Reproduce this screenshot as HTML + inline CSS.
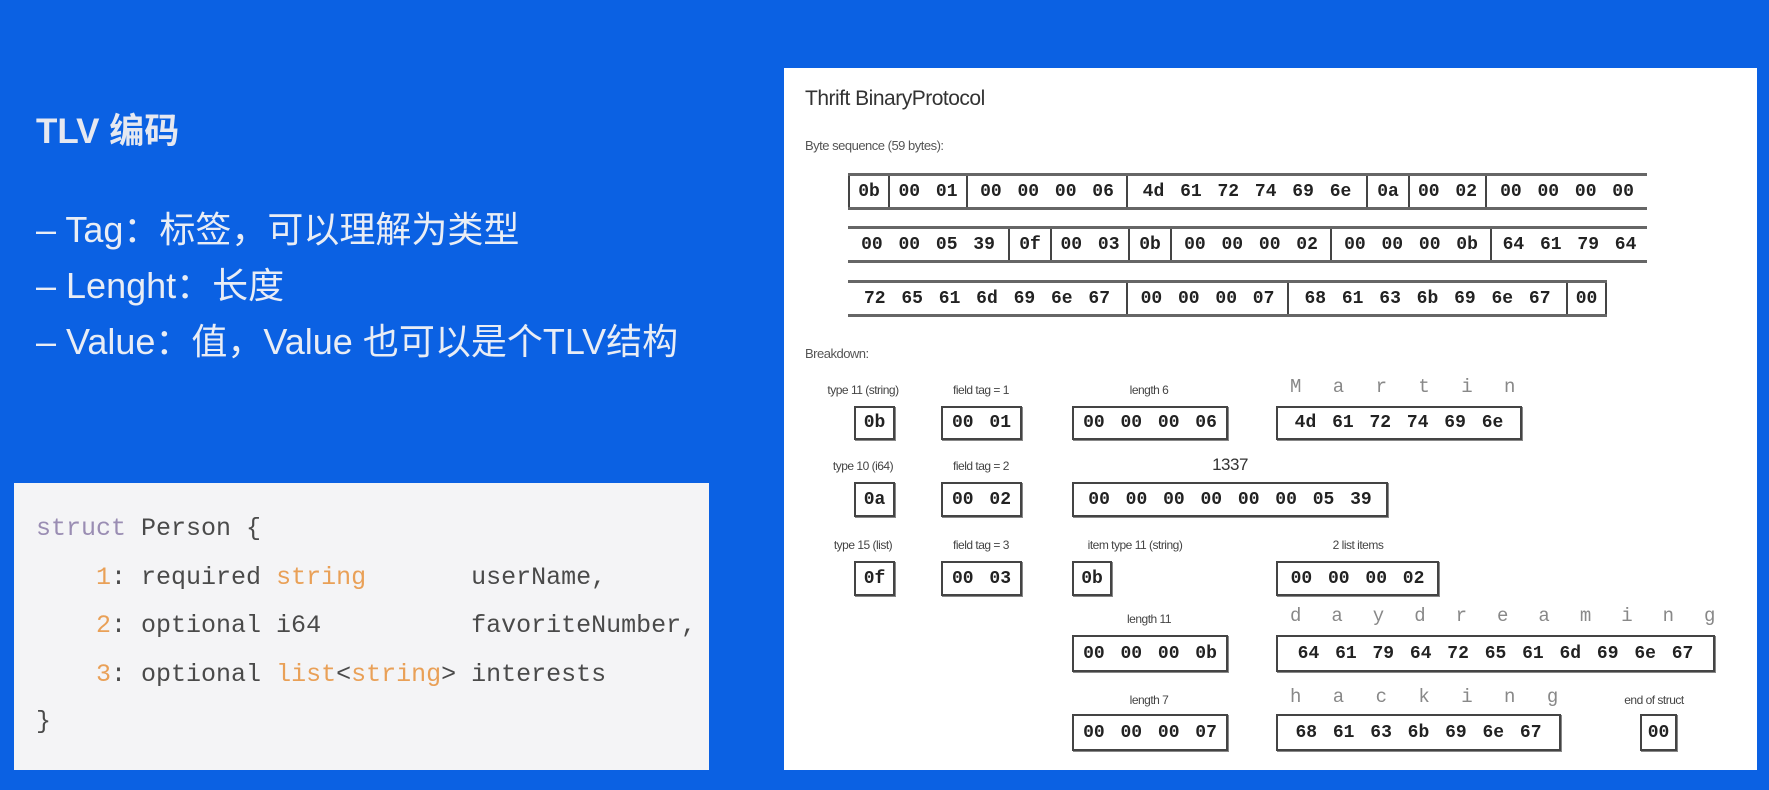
<!DOCTYPE html>
<html><head><meta charset="utf-8"><style>
*{margin:0;padding:0;box-sizing:border-box}
body{width:1769px;height:790px;background:#0b61e3;position:relative;overflow:hidden;font-family:"Liberation Sans","Noto Sans CJK SC",sans-serif}
.t{position:absolute;color:#e9edf5;white-space:nowrap}
.code{position:absolute;left:14px;top:483px;width:695px;height:287px;background:#f4f4f6}
.cl{position:absolute;left:22px;font-family:"Liberation Mono",monospace;font-size:25px;color:#4a4a4a;white-space:pre;line-height:30px}
.k{color:#9a8db3}.o{color:#e9a057}
.panel{position:absolute;left:784px;top:68px;width:973px;height:702px;background:#fff}
.a{position:absolute;white-space:nowrap}
.row{position:absolute;height:37px;border-top:3px solid #666;border-bottom:3px solid #666;display:flex}
.c{height:100%;border-right:2px solid #444;display:flex;align-items:center;justify-content:center;font-family:"Liberation Mono",monospace;font-weight:bold;font-size:18px;color:#222;word-spacing:5px}
.c.l{border-left:2px solid #444}
.c.n{border-right:none}
.b{position:absolute;border:2.5px solid #444;box-shadow:1px 1px 0 #888;display:flex;align-items:center;justify-content:center;font-family:"Liberation Mono",monospace;font-weight:bold;font-size:18px;color:#222;word-spacing:5px}
.lb{position:absolute;font-family:"Liberation Sans",sans-serif;font-size:12px;color:#444;transform:translateX(-50%);white-space:nowrap;letter-spacing:-0.5px}
.gl{position:absolute;font-family:"Liberation Mono",monospace;font-size:19px;color:#888;white-space:pre;letter-spacing:10px}
</style></head><body>
<div class="t" style="left:36px;top:103px;font-size:35px;font-weight:bold;color:#e6e8f0">TLV 编码</div>
<div class="t" style="left:36px;top:201px;font-size:36px">– Tag：标签，可以理解为类型</div>
<div class="t" style="left:36px;top:257px;font-size:36px">– Lenght：长度</div>
<div class="t" style="left:36px;top:313px;font-size:36px">– Value：值，Value 也可以是个TLV结构</div>

<div class="code">
<div class="cl" style="top:31px"><span class="k">struct</span> Person {</div>
<div class="cl" style="top:80px">    <span class="o">1</span>: required <span class="o">string</span>       userName,</div>
<div class="cl" style="top:128px">    <span class="o">2</span>: optional i64          favoriteNumber,</div>
<div class="cl" style="top:177px">    <span class="o">3</span>: optional <span class="o">list</span>&lt;<span class="o">string</span>&gt; interests</div>
<div class="cl" style="top:224px">}</div>
</div>

<div class="panel">
<div class="a" style="left:21px;top:19px;font-size:21px;color:#333;letter-spacing:-0.5px">Thrift BinaryProtocol</div>
<div class="a" style="left:21px;top:70px;font-size:13px;color:#555;letter-spacing:-0.5px">Byte sequence (59 bytes):</div>

<div class="row" style="left:64px;top:105px;width:799px">
<div class="c l" style="width:42px">0b</div><div class="c" style="width:78px">00 01</div><div class="c" style="width:160px">00 00 00 06</div><div class="c" style="width:240px">4d 61 72 74 69 6e</div><div class="c" style="width:42px">0a</div><div class="c" style="width:77px">00 02</div><div class="c n" style="width:160px">00 00 00 00</div>
</div>
<div class="row" style="left:64px;top:158px;width:799px">
<div class="c" style="width:162px">00 00 05 39</div><div class="c" style="width:42px">0f</div><div class="c" style="width:78px">00 03</div><div class="c" style="width:42px">0b</div><div class="c" style="width:160px">00 00 00 02</div><div class="c" style="width:160px">00 00 00 0b</div><div class="c n" style="width:155px">64 61 79 64</div>
</div>
<div class="row" style="left:64px;top:212px;width:759px">
<div class="c" style="width:280px">72 65 61 6d 69 6e 67</div><div class="c" style="width:161px">00 00 00 07</div><div class="c" style="width:279px">68 61 63 6b 69 6e 67</div><div class="c" style="width:39px">00</div>
</div>

<div class="a" style="left:21px;top:278px;font-size:13px;color:#555;letter-spacing:-0.5px">Breakdown:</div>

<div class="lb" style="left:79px;top:315px">type 11 (string)</div>
<div class="lb" style="left:197px;top:315px">field tag = 1</div>
<div class="lb" style="left:365px;top:315px">length 6</div>
<div class="gl" style="left:506px;top:308px">M a r t i n</div>
<div class="b" style="left:70px;top:338px;width:41px;height:34px">0b</div>
<div class="b" style="left:157px;top:338px;width:81px;height:34px">00 01</div>
<div class="b" style="left:288px;top:338px;width:156px;height:34px">00 00 00 06</div>
<div class="b" style="left:492px;top:338px;width:246px;height:34px">4d 61 72 74 69 6e</div>

<div class="lb" style="left:79px;top:391px">type 10 (i64)</div>
<div class="lb" style="left:197px;top:391px">field tag = 2</div>
<div class="lb" style="left:446px;top:387px;font-size:17px;color:#333">1337</div>
<div class="b" style="left:70px;top:414px;width:41px;height:35px">0a</div>
<div class="b" style="left:157px;top:414px;width:81px;height:35px">00 02</div>
<div class="b" style="left:288px;top:414px;width:316px;height:35px">00 00 00 00 00 00 05 39</div>

<div class="lb" style="left:79px;top:470px">type 15 (list)</div>
<div class="lb" style="left:197px;top:470px">field tag = 3</div>
<div class="lb" style="left:351px;top:470px">item type 11 (string)</div>
<div class="lb" style="left:574px;top:470px">2 list items</div>
<div class="b" style="left:70px;top:493px;width:41px;height:35px">0f</div>
<div class="b" style="left:157px;top:493px;width:81px;height:35px">00 03</div>
<div class="b" style="left:288px;top:493px;width:40px;height:35px">0b</div>
<div class="b" style="left:492px;top:493px;width:163px;height:35px">00 00 00 02</div>

<div class="lb" style="left:365px;top:544px">length 11</div>
<div class="gl" style="left:506px;top:537px;letter-spacing:9.3px">d a y d r e a m i n g</div>
<div class="b" style="left:288px;top:567px;width:156px;height:37px">00 00 00 0b</div>
<div class="b" style="left:492px;top:567px;width:439px;height:37px">64 61 79 64 72 65 61 6d 69 6e 67</div>

<div class="lb" style="left:365px;top:625px">length 7</div>
<div class="gl" style="left:506px;top:618px">h a c k i n g</div>
<div class="lb" style="left:870px;top:625px">end of struct</div>
<div class="b" style="left:288px;top:646px;width:156px;height:37px">00 00 00 07</div>
<div class="b" style="left:492px;top:646px;width:285px;height:37px">68 61 63 6b 69 6e 67</div>
<div class="b" style="left:856px;top:646px;width:37px;height:37px">00</div>
</div>
</body></html>
